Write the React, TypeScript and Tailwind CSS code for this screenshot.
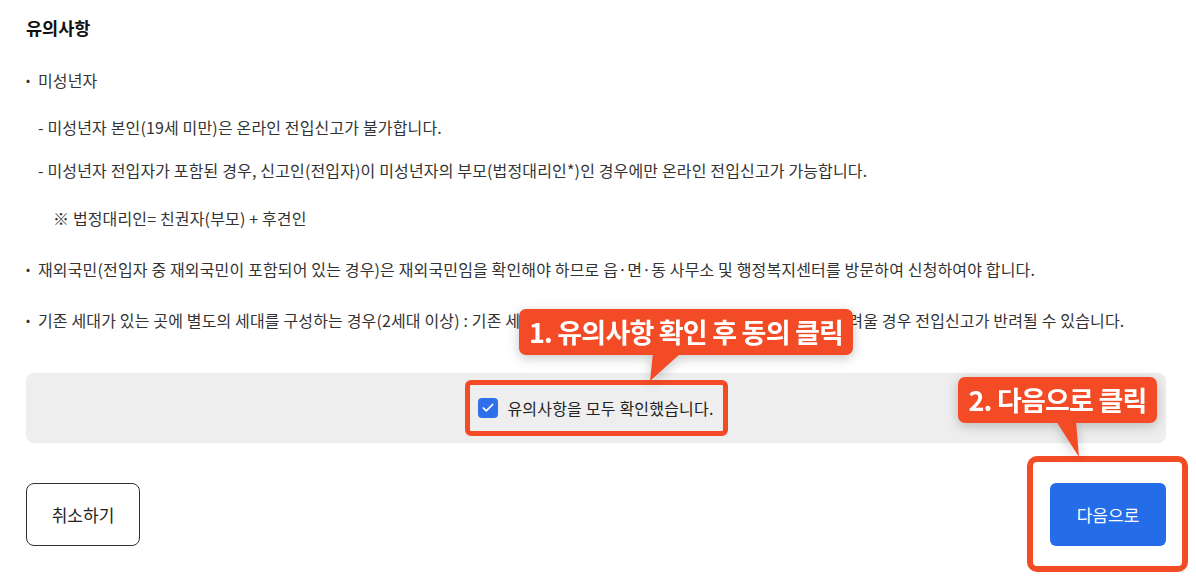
import { Check } from 'lucide-react';

const font = { fontFamily: '"Noto Sans CJK KR", "Noto Sans", sans-serif' };

const notes = [
  { kind: 'bullet', text: '미성년자', gap: 'mt-[30px]' },
  { kind: 'dash', text: '미성년자 본인(19세 미만)은 온라인 전입신고가 불가합니다.', gap: 'mt-[25px]' },
  {
    kind: 'dash',
    text: '미성년자 전입자가 포함된 경우, 신고인(전입자)이 미성년자의 부모(법정대리인*)인 경우에만 온라인 전입신고가 가능합니다.',
    gap: 'mt-[21px]',
  },
  { kind: 'ref', text: '※ 법정대리인= 친권자(부모) + 후견인', gap: 'mt-[26px]' },
  {
    kind: 'bullet',
    text: '재외국민(전입자 중 재외국민이 포함되어 있는 경우)은 재외국민임을 확인해야 하므로 읍·면·동 사무소 및 행정복지센터를 방문하여 신청하여야 합니다.',
    gap: 'mt-[29px]',
  },
  {
    kind: 'bullet',
    text: '기존 세대가 있는 곳에 별도의 세대를 구성하는 경우(2세대 이상) : 기존 세대주의 동의 및 확인이 필요하며, 세대주 확인이 어려울 경우 전입신고가 반려될 수 있습니다.',
    gap: 'mt-[29px]',
  },
];

const lineText = 'h-[22px] whitespace-nowrap text-[16px] leading-[22px] tracking-[0.15px] text-[#333]';

function NoteLine({ kind, text, gap }: { kind: string; text: string; gap: string }) {
  if (kind === 'bullet') {
    return (
      <div className={`${gap} flex items-center ${lineText}`}>
        <span className="w-[12px] text-[12px]">•</span>
        <span>{text}</span>
      </div>
    );
  }
  if (kind === 'dash') {
    return <div className={`${gap} pl-[12px] ${lineText}`}>- {text}</div>;
  }
  return <div className={`${gap} pl-[27px] ${lineText}`}>{text}</div>;
}

function Callout({
  label,
  className,
  tail,
}: {
  label: string;
  className: string;
  tail: string;
}) {
  return (
    <div className={`absolute drop-shadow-[0_3px_6px_rgba(0,0,0,0.22)] ${className}`}>
      <div className="flex h-[46px] items-center justify-center whitespace-nowrap rounded-[7px] bg-[#f34b26] text-[27px] font-bold tracking-[-0.8px] text-white">
        {label}
      </div>
      <svg className="absolute left-0 top-0 overflow-visible" width="1" height="1">
        <polygon points={tail} fill="#f34b26" />
      </svg>
    </div>
  );
}

export default function App() {
  return (
    <div className="relative h-[585px] w-[1196px] overflow-hidden bg-white" style={font}>
      <div className="w-[1166px] pl-[26px]">
        <h2 className="mt-[17px] h-[22px] text-[17.5px] font-bold leading-[22px] text-[#111]">유의사항</h2>

        {notes.map((n, i) => (
          <NoteLine key={i} {...n} />
        ))}

        <div className="mt-[42px] flex h-[70px] items-center justify-center rounded-[8px] bg-[#eeeeee]">
          <label className="flex items-center gap-[9px] text-[16px] tracking-[0.2px] text-[#222]">
            <span className="flex h-[20px] w-[20px] items-center justify-center rounded-[4px] bg-[#2f6fe9]">
              <Check className="h-[14px] w-[14px] text-white" strokeWidth={3} />
            </span>
            유의사항을 모두 확인했습니다.
          </label>
        </div>

        <div className="mt-[40px] flex justify-between">
          <button className="h-[63px] w-[114px] rounded-[8px] border border-[#333] bg-white text-[17px] text-[#222]">
            취소하기
          </button>
          <button className="h-[63px] w-[116px] rounded-[6px] bg-[#256ce9] text-[17px] text-white">다음으로</button>
        </div>
      </div>

      {/* highlight overlays */}
      <div className="absolute left-[465px] top-[380px] h-[56px] w-[263px] rounded-[6px] border-[5px] border-[#f34b26]" />
      <div className="absolute left-[1027px] top-[456px] h-[116px] w-[161px] rounded-[10px] border-[6px] border-[#f34b26]" />

      <Callout
        label="1. 유의사항 확인 후 동의 클릭"
        className="left-[519px] top-[309px] w-[334px]"
        tail="134,44 162,44 131,72"
      />
      <Callout
        label="2. 다음으로 클릭"
        className="left-[958px] top-[377px] w-[199px]"
        tail="98,44 118,44 121,80"
      />
    </div>
  );
}
